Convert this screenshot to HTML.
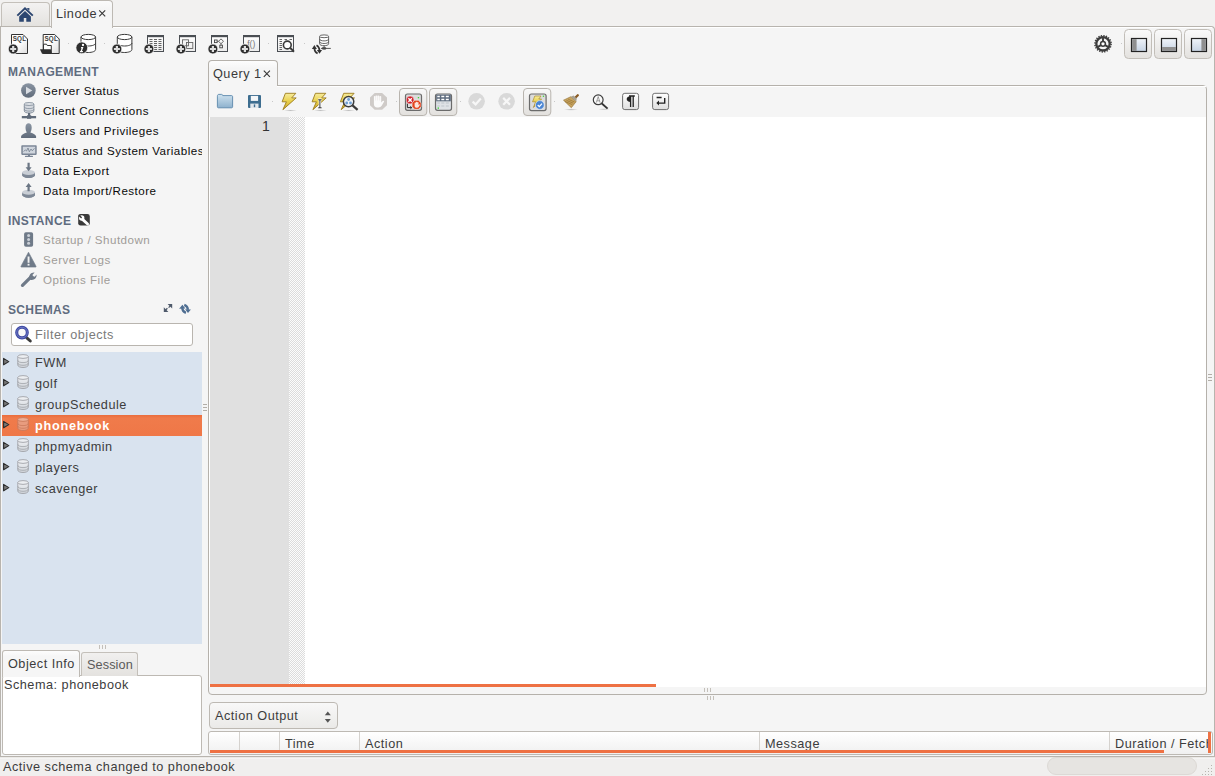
<!DOCTYPE html>
<html><head><meta charset="utf-8">
<style>
*{box-sizing:border-box;margin:0;padding:0}
html,body{width:1215px;height:776px;overflow:hidden;background:#f2f1f0;font-family:"Liberation Sans",sans-serif;color:#3c3c3c}
.a{position:absolute}
.t13{position:absolute;margin-top:1px;font-size:12.7px;line-height:13px;white-space:nowrap;letter-spacing:0.5px}
.t12{position:absolute;margin-top:-1px;font-size:11.6px;line-height:12px;white-space:nowrap;letter-spacing:0.48px}
.hdr{position:absolute;font-size:12px;line-height:12px;font-weight:bold;color:#5f6c7f;white-space:nowrap;letter-spacing:0.35px}
svg{position:absolute;overflow:visible}
</style></head><body>
<div class="a" style="left:0;top:0;width:1215px;height:30px;background:#f2f1f0"></div>
<!-- main window body -->
<div class="a" style="left:0;top:26px;width:1215px;height:740px;background:#f5f5f5;border:1px solid #b8b4ae;border-bottom:none;border-radius:0 4px 0 0"></div>
<div class="a" style="left:113px;top:27px;width:1099px;height:1px;background:#fff"></div>

<!-- top tab strip -->
<div class="a" style="left:1px;top:2px;width:49px;height:24px;border:1px solid #c4c0ba;border-bottom:none;border-radius:4px 4px 0 0;background:linear-gradient(#f3f2f1,#e4e2df)"></div>
<div class="a" style="left:51px;top:0;width:62px;height:28px;border:1px solid #bdb9b3;border-bottom:none;border-radius:4px 4px 0 0;background:linear-gradient(#fbfbfb,#f5f5f5 30%)"></div>
<div class="t13" style="left:56px;top:7px;color:#3a3a3a">Linode</div>


<!-- status bar -->
<div class="a" style="left:0;top:756px;width:1215px;height:20px;background:#f0efee;border-top:1px solid #b8b4ae"></div>
<div class="a" style="left:0;top:757px;width:1215px;height:2px;background:linear-gradient(#e6e4e1,#fafafa)"></div>
<div class="t13" style="left:3px;top:760px">Active schema changed to phonebook</div>
<div class="a" style="left:1047px;top:757px;width:150px;height:18px;border-radius:9px;background:#e6e4e1;border:1px solid #dcd9d5"></div>

<!-- sidebar -->
<div class="hdr" style="left:8px;top:66px">MANAGEMENT</div>
<div class="t12" style="left:43px;top:86px;color:#0a0a0a">Server Status</div>
<div class="t12" style="left:43px;top:106px;color:#0a0a0a">Client Connections</div>
<div class="t12" style="left:43px;top:126px;color:#0a0a0a">Users and Privileges</div>
<div class="a" style="left:43px;top:140px;width:159px;height:20px;overflow:hidden"><div class="t12" style="left:0;top:6px;color:#0a0a0a">Status and System Variables</div></div>
<div class="t12" style="left:43px;top:166px;color:#0a0a0a">Data Export</div>
<div class="t12" style="left:43px;top:186px;color:#0a0a0a">Data Import/Restore</div>

<div class="hdr" style="left:8px;top:215px">INSTANCE</div>
<div class="t12" style="left:43px;top:235px;color:#a09c98">Startup / Shutdown</div>
<div class="t12" style="left:43px;top:255px;color:#a09c98">Server Logs</div>
<div class="t12" style="left:43px;top:275px;color:#a09c98">Options File</div>

<div class="hdr" style="left:8px;top:304px">SCHEMAS</div>
<div class="a" style="left:11px;top:323px;width:182px;height:23px;background:#fff;border:1px solid #b9b5af;border-radius:3px"></div>
<div class="t13" style="left:35px;top:328px;color:#7b7b7b">Filter objects</div>

<div class="a" style="left:2px;top:352px;width:200px;height:292px;background:#d9e3ef"></div>
<div class="a" style="left:2px;top:415px;width:200px;height:21px;background:linear-gradient(#ea6d3d,#f07b4b 15%,#ef7747)"></div>
<div class="t13" style="left:35px;top:356px">FWM</div>
<div class="t13" style="left:35px;top:377px">golf</div>
<div class="t13" style="left:35px;top:398px">groupSchedule</div>
<div class="t13" style="left:35px;top:419px;color:#fff;font-weight:bold;letter-spacing:0.75px">phonebook</div>
<div class="t13" style="left:35px;top:440px">phpmyadmin</div>
<div class="t13" style="left:35px;top:461px">players</div>
<div class="t13" style="left:35px;top:482px">scavenger</div>

<!-- object info -->
<div class="a" style="left:2px;top:675px;width:200px;height:80px;background:#fff;border:1px solid #bdb9b3;border-radius:3px"></div>
<div class="a" style="left:81px;top:652px;width:57px;height:24px;border:1px solid #c4c0ba;border-bottom:none;border-radius:3px 3px 0 0;background:linear-gradient(#f1f0ef,#e4e2df)"></div>
<div class="a" style="left:2px;top:650px;width:78px;height:27px;border:1px solid #bdb9b3;border-bottom:none;border-radius:3px 3px 0 0;background:linear-gradient(#fdfdfd,#f6f6f6 20%)"></div>
<div class="t13" style="left:8px;top:657px">Object Info</div>
<div class="t13" style="left:87px;top:658px;color:#5a5a5a;letter-spacing:0.1px">Session</div>
<div class="t13" style="left:4px;top:678px">Schema: phonebook</div>

<!-- editor frame -->
<div class="a" style="left:208px;top:85px;width:999px;height:610px;border:1px solid #b5b1ab;border-radius:0 4px 4px 4px;background:#f5f5f5"></div>
<div class="a" style="left:277px;top:86px;width:929px;height:1px;background:#fff"></div>
<div class="a" style="left:208px;top:60px;width:70px;height:26px;border:1px solid #b5b1ab;border-bottom:none;border-radius:4px 4px 0 0;background:linear-gradient(#fdfdfd,#f5f5f5 30%)"></div>
<div class="t13" style="left:213px;top:67px;color:#3a3a3a">Query 1</div>

<div class="a" style="left:209px;top:117px;width:997px;height:570px;background:#fff"></div>
<div class="a" style="left:210px;top:117px;width:79px;height:567px;background:#e0e0e0"></div>
<div class="a" style="left:289px;top:117px;width:16px;height:567px;background-color:#fcfcfc;background-image:linear-gradient(45deg,#dcdcdc 25%,transparent 25%,transparent 75%,#dcdcdc 75%),linear-gradient(45deg,#dcdcdc 25%,transparent 25%,transparent 75%,#dcdcdc 75%);background-size:2px 2px;background-position:0 0,1px 1px"></div>
<div class="t13" style="left:262px;top:119px;color:#333;font-size:14px;letter-spacing:0">1</div>
<div class="a" style="left:210px;top:684px;width:446px;height:3px;background:#ee7143"></div>

<!-- right splitter handle -->
<div class="a" style="left:1208px;top:374px;width:4px;height:1px;background:#b2aea8"></div>
<div class="a" style="left:1208px;top:377px;width:4px;height:1px;background:#b2aea8"></div>
<div class="a" style="left:1208px;top:380px;width:4px;height:1px;background:#b2aea8"></div>
<!-- left splitter handle -->
<div class="a" style="left:203px;top:404px;width:4px;height:1px;background:#b2aea8"></div>
<div class="a" style="left:203px;top:407px;width:4px;height:1px;background:#b2aea8"></div>
<div class="a" style="left:203px;top:410px;width:4px;height:1px;background:#b2aea8"></div>

<!-- action output -->
<div class="a" style="left:209px;top:702px;width:129px;height:27px;border:1px solid #bdb9b3;border-radius:4px;background:linear-gradient(#f8f8f8,#ebeae8)"></div>
<div class="t13" style="left:215px;top:709px">Action Output</div>
<!-- output table -->
<div class="a" style="left:208px;top:731px;width:1005px;height:24px;border:1px solid #bdb9b3;border-radius:3px;background:linear-gradient(#ffffff,#f0f0f0)"></div>
<div class="a" style="left:239px;top:732px;width:1px;height:20px;background:#d5d2ce"></div>
<div class="a" style="left:279px;top:732px;width:1px;height:20px;background:#d5d2ce"></div>
<div class="a" style="left:359px;top:732px;width:1px;height:20px;background:#d5d2ce"></div>
<div class="a" style="left:759px;top:732px;width:1px;height:20px;background:#d5d2ce"></div>
<div class="a" style="left:1109px;top:732px;width:1px;height:20px;background:#d5d2ce"></div>
<div class="t13" style="left:285px;top:737px">Time</div>
<div class="t13" style="left:365px;top:737px">Action</div>
<div class="t13" style="left:765px;top:737px">Message</div>
<div class="a" style="left:1110px;top:732px;width:98px;height:20px;overflow:hidden"><div class="t13" style="left:5px;top:5px">Duration / Fetch</div></div>
<div class="a" style="left:210px;top:750px;width:954px;height:3px;background:#ee7143"></div>
<div class="a" style="left:1208px;top:732px;width:3px;height:21px;background:#ee7143"></div>

<svg class="a" style="left:0;top:0" width="1215" height="776" viewBox="0 0 1215 776">
<defs>
<linearGradient id="docg" x1="0" y1="0" x2="1" y2="1"><stop offset="0.45" stop-color="#ffffff"/><stop offset="1" stop-color="#dcdcdc"/></linearGradient>
<linearGradient id="wing" x1="0" y1="0" x2="0" y2="1"><stop offset="0" stop-color="#ffffff"/><stop offset="1" stop-color="#ebebeb"/></linearGradient>
<linearGradient id="boltg" x1="0" y1="0" x2="0" y2="1"><stop offset="0" stop-color="#f7ec9c"/><stop offset="0.5" stop-color="#e8cf4a"/><stop offset="1" stop-color="#caa12a"/></linearGradient>
<linearGradient id="foldg" x1="0" y1="0" x2="0" y2="1"><stop offset="0" stop-color="#cde0ee"/><stop offset="1" stop-color="#8cb0cc"/></linearGradient>
<linearGradient id="sideg" x1="0" y1="0" x2="0" y2="1"><stop offset="0" stop-color="#8b96a4"/><stop offset="1" stop-color="#5d6877"/></linearGradient>
<linearGradient id="dbg" x1="0" y1="0" x2="0" y2="1"><stop offset="0" stop-color="#eef0f3"/><stop offset="1" stop-color="#d5d8dd"/></linearGradient>
<linearGradient id="laybl" x1="0" y1="0" x2="0" y2="1"><stop offset="0" stop-color="#f0f4f9"/><stop offset="1" stop-color="#c6d3e3"/></linearGradient>
<linearGradient id="btng" x1="0" y1="0" x2="0" y2="1"><stop offset="0" stop-color="#fafafa"/><stop offset="1" stop-color="#e3e1de"/></linearGradient>
<linearGradient id="diskg" x1="0" y1="0" x2="0" y2="1"><stop offset="0" stop-color="#b9c0c9"/><stop offset="1" stop-color="#6e7886"/></linearGradient>
<radialGradient id="shad"><stop offset="0" stop-color="#000" stop-opacity="0.25"/><stop offset="1" stop-color="#000" stop-opacity="0"/></radialGradient>





</defs>

<path d="M99.2,10.4L105.2,16.4M105.2,10.4L99.2,16.4M263.8,70.7L269.9,76.8M269.9,70.7L263.8,76.8" stroke="#3a3a3a" stroke-width="1.15"/>
<!-- home icon -->
<path d="M17.3,15.6L25,8.2L32.8,15.6" fill="none" stroke="#2c4670" stroke-width="1.9"/>
<path d="M26.6,8.3L29.4,8V10.8Z" fill="#2c4670"/>
<path d="M19.2,16.5L25,11L30.9,16.5V21.8H26.3V17.9H23.8V21.8H19.2Z" fill="#2c4670"/>

<!-- toolbar 1: new sql -->
<path d="M11.5,34.5H23L27.5,39V53.5H11.5Z" fill="url(#docg)" stroke="#333" stroke-width="1"/>
<text x="12.7" y="41.4" font-family="Liberation Sans" font-weight="bold" font-size="6.3" fill="#3a3a3a" letter-spacing="0.2">SQL</text>
<g transform="translate(13.2,49)"><circle r="5" fill="#2e2e2e" stroke="#fafafa" stroke-width="0.8"/><path d="M-3,0H3M0,-3V3" stroke="#dddddd" stroke-width="2.2"/></g>
<!-- 2: open sql -->
<path d="M43.2,34.5H54.7L59.2,39V53.5H43.2Z" fill="url(#docg)" stroke="#333" stroke-width="1"/>
<text x="44.4" y="41.4" font-family="Liberation Sans" font-weight="bold" font-size="6.3" fill="#3a3a3a" letter-spacing="0.2">SQL</text>
<path d="M43.5,53.5V44.2H46.5L47.3,45.5H51.3V53.5Z" fill="#fff" stroke="#333" stroke-width="1"/>
<path d="M40,49.2H50.8L51.8,53.8H42Z" fill="#2e2e2e"/>
<!-- dots -->
<rect x="68" y="43" width="1" height="1" fill="#c8c8c8"/>
<rect x="104" y="43" width="1" height="1" fill="#c8c8c8"/>
<rect x="268" y="43" width="1" height="1" fill="#c8c8c8"/>
<rect x="304" y="43" width="1" height="1" fill="#c8c8c8"/>
<!-- 3: schema inspector DB + info -->
<path d="M81,37V49.5C81,51.3 84.4,52.5 88.3,52.5S95.6,51.3 95.6,49.5V37" fill="#fff" stroke="#3a3a3a" stroke-width="1"/>
<ellipse cx="88.3" cy="37" rx="7.3" ry="2.6" fill="#fff" stroke="#3a3a3a" stroke-width="1"/>
<path d="M81,43C81,44.8 84.4,46 88.3,46S95.6,44.8 95.6,43" fill="none" stroke="#3a3a3a" stroke-width="1"/>
<circle cx="81.8" cy="47.8" r="5.9" fill="#2e2e2e" stroke="#fafafa" stroke-width="0.7"/>
<circle cx="83" cy="45" r="1.15" fill="#fff"/><path d="M81.2,47.1H83.4L82,51.1H83.1L82.7,52.2H79.7L80.1,51.1H80.6L81.6,48.2H80.8Z" fill="#fff"/>
<!-- 4: create schema -->
<path d="M117.3,37V49.5C117.3,51.3 120.7,52.5 124.6,52.5S131.9,51.3 131.9,49.5V37" fill="#fff" stroke="#3a3a3a" stroke-width="1"/>
<ellipse cx="124.6" cy="37" rx="7.3" ry="2.6" fill="#fff" stroke="#3a3a3a" stroke-width="1"/>
<path d="M117.3,43C117.3,44.8 120.7,46 124.6,46S131.9,44.8 131.9,43" fill="none" stroke="#3a3a3a" stroke-width="1"/>
<g transform="translate(116.9,49)"><circle r="5" fill="#2e2e2e" stroke="#fafafa" stroke-width="0.8"/><path d="M-3,0H3M0,-3V3" stroke="#dddddd" stroke-width="2.2"/></g>
<!-- 5: create table -->
<g transform="translate(147,35)"><rect x="0.5" y="0.5" width="16" height="16" fill="url(#wing)" stroke="#4a4e53" stroke-width="1"/><rect x="0" y="0" width="17" height="2.2" fill="#4a4e53"/></g>
<path d="M149.5,39.5H152.5M154,39.5H157M158.5,39.5H161.5M149.5,41.5H152.5M154,41.5H157M158.5,41.5H161.5M149.5,43.5H152.5M154,43.5H157M158.5,43.5H161.5M149.5,45.5H152.5M154,45.5H157M158.5,45.5H161.5M149.5,47.5H152.5M154,47.5H157M158.5,47.5H161.5M149.5,49.5H152.5M154,49.5H157M158.5,49.5H161.5" stroke="#555" stroke-width="0.9"/>
<g transform="translate(148.9,49)"><circle r="5" fill="#2e2e2e" stroke="#fafafa" stroke-width="0.8"/><path d="M-3,0H3M0,-3V3" stroke="#dddddd" stroke-width="2.2"/></g>
<!-- 6: create view -->
<g transform="translate(179,35)"><rect x="0.5" y="0.5" width="16" height="16" fill="url(#wing)" stroke="#4a4e53" stroke-width="1"/><rect x="0" y="0" width="17" height="2.2" fill="#4a4e53"/></g>
<rect x="182.5" y="39.8" width="6" height="6" fill="none" stroke="#666" stroke-width="0.9"/>
<rect x="186.5" y="42.5" width="6.3" height="6" fill="none" stroke="#666" stroke-width="0.9"/>
<g transform="translate(180.9,49)"><circle r="5" fill="#2e2e2e" stroke="#fafafa" stroke-width="0.8"/><path d="M-3,0H3M0,-3V3" stroke="#dddddd" stroke-width="2.2"/></g>
<!-- 7: create proc -->
<g transform="translate(211,35)"><rect x="0.5" y="0.5" width="16" height="16" fill="url(#wing)" stroke="#4a4e53" stroke-width="1"/><rect x="0" y="0" width="17" height="2.2" fill="#4a4e53"/></g>
<rect x="214.5" y="40" width="2.6" height="2.6" fill="none" stroke="#444" stroke-width="0.9"/>
<path d="M221,38.9L223.5,41.3L221,43.7L218.5,41.3Z" fill="none" stroke="#444" stroke-width="0.8"/>
<path d="M217.1,41.3H218.5M221,43.7V45" stroke="#444" stroke-width="0.8"/>
<rect x="219.8" y="45.2" width="2.6" height="2.6" fill="none" stroke="#444" stroke-width="0.9"/>
<g transform="translate(212.9,49)"><circle r="5" fill="#2e2e2e" stroke="#fafafa" stroke-width="0.8"/><path d="M-3,0H3M0,-3V3" stroke="#dddddd" stroke-width="2.2"/></g>
<!-- 8: create function -->
<g transform="translate(243,35)"><rect x="0.5" y="0.5" width="16" height="16" fill="url(#wing)" stroke="#4a4e53" stroke-width="1"/><rect x="0" y="0" width="17" height="2.2" fill="#4a4e53"/></g>
<text x="247.2" y="46.5" font-family="Liberation Sans" font-size="8.5" fill="#777">f()</text>
<g transform="translate(244.9,49)"><circle r="5" fill="#2e2e2e" stroke="#fafafa" stroke-width="0.8"/><path d="M-3,0H3M0,-3V3" stroke="#dddddd" stroke-width="2.2"/></g>
<!-- 9: search table data -->
<g transform="translate(277,35)"><rect x="0.5" y="0.5" width="16" height="16" fill="url(#wing)" stroke="#4a4e53" stroke-width="1"/><rect x="0" y="0" width="17" height="2.2" fill="#4a4e53"/></g>
<path d="M279.5,39.5H282M284.5,39.5H287M289.5,39.5H292M279.5,41.5H282M279.5,43.5H282M279.5,45.5H282M279.5,47.5H282M279.5,49.5H282" stroke="#555" stroke-width="0.9"/>
<circle cx="287.3" cy="45" r="3.9" fill="#fff" stroke="#3a3a3a" stroke-width="1.6"/>
<path d="M290.2,47.9L294,51.8" stroke="#3a3a3a" stroke-width="2"/>
<!-- 10: reconnect -->
<path d="M319.6,36.3V43.8C319.6,45 321.7,45.7 324.1,45.7S328.6,45 328.6,43.8V36.3" fill="#fff" stroke="#555" stroke-width="0.9"/>
<ellipse cx="324.1" cy="36.3" rx="4.5" ry="1.4" fill="#fff" stroke="#555" stroke-width="0.9"/>
<path d="M319.6,39C319.6,40.2 321.7,40.9 324.1,40.9S328.6,40.2 328.6,39M319.6,41.6C319.6,42.8 321.7,43.5 324.1,43.5S328.6,42.8 328.6,41.6" fill="none" stroke="#555" stroke-width="0.9"/>
<path d="M324.1,45.7V47.5" stroke="#555" stroke-width="1"/>
<ellipse cx="324.1" cy="48.4" rx="2.3" ry="1.4" fill="#555"/>
<path d="M321,48.4H330.8" stroke="#444" stroke-width="0.9"/>
<path d="M311.9,48.9L314.4,45L316.9,48.9Z" fill="#333"/>
<path d="M314.4,48.5Q314.5,51.9 317.6,53.6" fill="none" stroke="#333" stroke-width="1.7"/>
<path d="M316.9,50L319.5,53.8L322.1,50Z" fill="#333"/>
<path d="M319.5,50.4Q319.4,47 316.5,45.3" fill="none" stroke="#333" stroke-width="1.7"/>

<!-- gear -->
<g transform="translate(1103,43.8)">
<circle r="8.1" fill="none" stroke="#3c3c3c" stroke-width="1.5" stroke-dasharray="1.3 1.25"/>
<circle r="6.7" fill="none" stroke="#3c3c3c" stroke-width="2.3"/>
<circle r="2.4" fill="#fff" stroke="#3c3c3c" stroke-width="1.5"/>
<path d="M0,-2.4V-5.8M-2.1,1.3L-5,3.1M2.1,1.3L5,3.1" stroke="#3c3c3c" stroke-width="1.9"/>
</g>
<rect x="1121" y="43" width="1" height="1" fill="#c8c8c8"/>
<!-- layout buttons -->
<rect x="1124.5" y="29.5" width="27" height="29" rx="4" fill="url(#btng)" stroke="#c2beb8"/>
<rect x="1154.5" y="29.5" width="27" height="29" rx="4" fill="url(#btng)" stroke="#c2beb8"/>
<rect x="1184.5" y="29.5" width="27" height="29" rx="4" fill="url(#btng)" stroke="#c2beb8"/>
<rect x="1131.5" y="38.5" width="15" height="13" fill="url(#laybl)" stroke="#222" stroke-width="1.2"/>
<rect x="1132.1" y="39.1" width="4.5" height="11.8" fill="#8f8f8f"/>
<rect x="1161.5" y="38.5" width="15" height="13" fill="url(#laybl)" stroke="#222" stroke-width="1.2"/>
<rect x="1162.1" y="47" width="13.8" height="3.9" fill="#8f8f8f"/>
<rect x="1191.5" y="38.5" width="15" height="13" fill="url(#laybl)" stroke="#222" stroke-width="1.2"/>
<rect x="1201.4" y="39.1" width="4.5" height="11.8" fill="#8f8f8f"/>
</svg>

<svg class="a" style="left:0;top:0" width="1215" height="776" viewBox="0 0 1215 776">
<defs>
<linearGradient id="sideg2" x1="0" y1="0" x2="0" y2="1"><stop offset="0" stop-color="#8a95a3"/><stop offset="1" stop-color="#5f6a79"/></linearGradient>
<linearGradient id="dbg2" x1="0" y1="0" x2="0" y2="1"><stop offset="0" stop-color="#eef0f3"/><stop offset="1" stop-color="#cfd3d9"/></linearGradient>
<linearGradient id="boltg2" x1="0" y1="0" x2="0" y2="1"><stop offset="0" stop-color="#f7ec9c"/><stop offset="0.5" stop-color="#e8cf4a"/><stop offset="1" stop-color="#caa12a"/></linearGradient>
<linearGradient id="foldg2" x1="0" y1="0" x2="0" y2="1"><stop offset="0" stop-color="#cfe2ef"/><stop offset="1" stop-color="#8db1cd"/></linearGradient>
<linearGradient id="tbtn" x1="0" y1="0" x2="0" y2="1"><stop offset="0" stop-color="#f8f8f8"/><stop offset="1" stop-color="#e2e0dd"/></linearGradient>
<linearGradient id="pbtn" x1="0" y1="0" x2="0" y2="1"><stop offset="0" stop-color="#ffffff"/><stop offset="1" stop-color="#dedede"/></linearGradient>
<radialGradient id="shad2"><stop offset="0" stop-color="#000" stop-opacity="0.22"/><stop offset="1" stop-color="#000" stop-opacity="0"/></radialGradient>



</defs>

<!-- sidebar management icons -->
<circle cx="28.4" cy="90.5" r="7.3" fill="url(#sideg2)"/>
<path d="M26,86.8L32.3,90.5L26,94.2Z" fill="#d9dde3"/>
<!-- client connections -->
<path d="M24.3,104V111C24.3,112.3 26.6,113 29.1,113S33.9,112.3 33.9,111V104" fill="#d5d9df" stroke="#808b99" stroke-width="0.9"/>
<ellipse cx="29.1" cy="104" rx="4.8" ry="1.4" fill="#e6e9ed" stroke="#808b99" stroke-width="0.9"/>
<path d="M24.3,106.7C24.3,108 26.6,108.6 29.1,108.6S33.9,108 33.9,106.7M24.3,109.2C24.3,110.5 26.6,111.1 29.1,111.1S33.9,110.5 33.9,109.2" fill="none" stroke="#808b99" stroke-width="0.8"/>
<rect x="28" y="113" width="2.2" height="3.5" fill="#5f6a79"/>
<rect x="21.8" y="116" width="14.3" height="2.3" fill="#5f6a79"/>
<rect x="27" y="115.3" width="4.2" height="3.5" fill="#5f6a79"/>
<!-- user -->
<path d="M25.5,127.6C25.5,124.6 27,123.3 28.6,123.3S31.7,124.6 31.7,127.6C31.7,130 31,131.4 30.4,132.4C33.5,133.3 35.8,134.6 36.1,136.3V138H21.1V136.3C21.4,134.6 23.7,133.3 26.8,132.4C26.2,131.4 25.5,130 25.5,127.6Z" fill="url(#sideg2)"/>
<!-- monitor -->
<rect x="21.3" y="145.3" width="15.4" height="9.6" rx="0.8" fill="#7a8595"/>
<rect x="22.8" y="146.7" width="12.4" height="6.8" fill="#cfd5dd"/>
<path d="M23.5,151.5L25.3,150L26.5,151L28,148L29.3,151.8L31,149L32.3,150.8L34.5,148.3" fill="none" stroke="#6a7585" stroke-width="0.7"/>
<rect x="28" y="155" width="2" height="1.3" fill="#7a8595"/>
<rect x="24.9" y="155.8" width="8.1" height="1.3" rx="0.6" fill="#7a8595"/>
<!-- export -->
<ellipse cx="28.6" cy="175" rx="6.4" ry="2.9" fill="#6f7a88"/>
<path d="M22.2,172.5V175C22.2,176.6 25,177.9 28.6,177.9S35,176.6 35,175V172.5" fill="#7e8896"/>
<ellipse cx="28.6" cy="172.5" rx="6.4" ry="2.5" fill="#c9ced5"/>
<path d="M27.5,162.8H29.7V167.2H31.6L28.6,171.2L25.6,167.2H27.5Z" fill="#6b7684"/>
<!-- import -->
<ellipse cx="28.6" cy="194.8" rx="6.4" ry="2.9" fill="#6f7a88"/>
<path d="M22.2,192.3V194.8C22.2,196.4 25,197.7 28.6,197.7S35,196.4 35,194.8V192.3" fill="#7e8896"/>
<ellipse cx="28.6" cy="192.3" rx="6.4" ry="2.5" fill="#c9ced5"/>
<path d="M27.5,191.2H29.7V187H31.6L28.6,183L25.6,187H27.5Z" fill="#6b7684"/>

<!-- instance header icon -->
<rect x="78.2" y="214.1" width="11.6" height="11.5" rx="2.4" fill="#3a3a3a"/>
<path d="M82.8,219.6L87.6,224" stroke="#fff" stroke-width="2.9" stroke-linecap="round"/>
<circle cx="81.7" cy="218" r="2.7" fill="#fff"/>
<path d="M79.3,215.6L81.2,217.5" stroke="#3a3a3a" stroke-width="1.5" stroke-linecap="round"/>
<!-- traffic light -->
<rect x="24.1" y="232.2" width="9" height="14.5" rx="1.8" fill="#6f7a88"/>
<circle cx="28.6" cy="235.6" r="1.5" fill="#cbd0d7"/>
<circle cx="28.6" cy="239.5" r="1.5" fill="#cbd0d7"/>
<circle cx="28.6" cy="243.3" r="1.5" fill="#cbd0d7"/>
<!-- warning -->
<path d="M28.5,252.2L36.1,266.4C36.2,266.8 36,267.1 35.6,267.1H21.4C21,267.1 20.8,266.8 20.9,266.4Z" fill="#6f7a88" stroke="#6f7a88" stroke-width="0.6" stroke-linejoin="round"/>
<rect x="27.6" y="256.5" width="1.9" height="6.3" fill="#f2f2f2"/>
<rect x="27.6" y="263.8" width="1.9" height="1.8" fill="#f2f2f2"/>
<!-- wrench -->
<path d="M22.5,285.3L30.3,277.6" stroke="#6f7a88" stroke-width="3.3" stroke-linecap="round"/>
<path d="M29.4,278.4C28.6,275.2 31.2,272.1 34.6,272.6L32.4,274.9L33.3,276.3L34.8,276.8L36.5,274.6C37,278.3 33.6,280.9 30.3,279.8Z" fill="#6f7a88"/>

<!-- schemas header icons -->
<path d="M167.6,304H172.2V308.6Z M163.8,307.3V311.9H168.4Z" fill="#4f5a6b"/>
<path d="M170.8,305.4L168.6,307.6M165.2,310.5L167.4,308.3" stroke="#4f5a6b" stroke-width="1.3"/>
<path d="M179.1,308.7L182.4,304.8L185.4,308.4Z" fill="#4f6e92"/>
<path d="M182.3,308Q182.4,311.6 185.9,312.8" fill="none" stroke="#4f6e92" stroke-width="2.3"/>
<path d="M185.1,309.3L188,313.1L190.9,309.6Z" fill="#4f6e92"/>
<path d="M187.9,309.8Q187.8,306.1 184.3,304.9" fill="none" stroke="#4f6e92" stroke-width="2.3"/>
<!-- filter magnifier -->
<path d="M26.8,337.9L30.3,341" stroke="#3a3a3a" stroke-width="3" stroke-linecap="round"/>
<circle cx="22" cy="332.6" r="5.3" fill="#f8f8f8" stroke="#3d49a3" stroke-width="3.1"/>
<circle cx="22" cy="332.6" r="5.3" fill="none" stroke="#8d95d6" stroke-width="0.6"/>

<!-- schema tree -->
<g transform="translate(0,0)"><path d="M3.6,358.4L8.8,361.6L3.6,364.8Z" fill="#777" stroke="#2a2a2a" stroke-width="1.1" stroke-linejoin="round"/></g><g transform="translate(0,0)"><path d="M17.8,356.5V365C17.8,366.6 20.3,367.5 23,367.5S28.3,366.6 28.3,365V356.5" fill="url(#dbg2)" stroke="#a0a3a8" stroke-width="0.9"/><ellipse cx="23" cy="356.5" rx="5.25" ry="1.9" fill="#eceef1" stroke="#a0a3a8" stroke-width="0.9"/><path d="M17.8,360.3C17.8,361.9 20.3,362.6 23,362.6S28.3,361.9 28.3,360.3M17.8,363C17.8,364.6 20.3,365.3 23,365.3S28.3,364.6 28.3,363" fill="none" stroke="#a0a3a8" stroke-width="0.8"/></g>
<g transform="translate(0,21)"><path d="M3.6,358.4L8.8,361.6L3.6,364.8Z" fill="#777" stroke="#2a2a2a" stroke-width="1.1" stroke-linejoin="round"/></g><g transform="translate(0,21)"><path d="M17.8,356.5V365C17.8,366.6 20.3,367.5 23,367.5S28.3,366.6 28.3,365V356.5" fill="url(#dbg2)" stroke="#a0a3a8" stroke-width="0.9"/><ellipse cx="23" cy="356.5" rx="5.25" ry="1.9" fill="#eceef1" stroke="#a0a3a8" stroke-width="0.9"/><path d="M17.8,360.3C17.8,361.9 20.3,362.6 23,362.6S28.3,361.9 28.3,360.3M17.8,363C17.8,364.6 20.3,365.3 23,365.3S28.3,364.6 28.3,363" fill="none" stroke="#a0a3a8" stroke-width="0.8"/></g>
<g transform="translate(0,42)"><path d="M3.6,358.4L8.8,361.6L3.6,364.8Z" fill="#777" stroke="#2a2a2a" stroke-width="1.1" stroke-linejoin="round"/></g><g transform="translate(0,42)"><path d="M17.8,356.5V365C17.8,366.6 20.3,367.5 23,367.5S28.3,366.6 28.3,365V356.5" fill="url(#dbg2)" stroke="#a0a3a8" stroke-width="0.9"/><ellipse cx="23" cy="356.5" rx="5.25" ry="1.9" fill="#eceef1" stroke="#a0a3a8" stroke-width="0.9"/><path d="M17.8,360.3C17.8,361.9 20.3,362.6 23,362.6S28.3,361.9 28.3,360.3M17.8,363C17.8,364.6 20.3,365.3 23,365.3S28.3,364.6 28.3,363" fill="none" stroke="#a0a3a8" stroke-width="0.8"/></g>
<g transform="translate(0,63)"><path d="M3.6,358.4L8.8,361.6L3.6,364.8Z" fill="#777" stroke="#2a2a2a" stroke-width="1.1" stroke-linejoin="round"/></g>
<g opacity="0.9"><path d="M17.8,419.5V428C17.8,429.6 20.3,430.5 23,430.5S28.3,429.6 28.3,428V419.5" fill="#e8a085" stroke="#c77a5e" stroke-width="0.9"/><ellipse cx="23" cy="419.5" rx="5.25" ry="1.9" fill="#eeb49e" stroke="#c77a5e" stroke-width="0.9"/><path d="M17.8,423.3C17.8,424.9 20.3,425.6 23,425.6S28.3,424.9 28.3,423.3M17.8,426C17.8,427.6 20.3,428.3 23,428.3S28.3,427.6 28.3,426" fill="none" stroke="#c77a5e" stroke-width="0.8"/></g>
<g transform="translate(0,84)"><path d="M3.6,358.4L8.8,361.6L3.6,364.8Z" fill="#777" stroke="#2a2a2a" stroke-width="1.1" stroke-linejoin="round"/></g><g transform="translate(0,84)"><path d="M17.8,356.5V365C17.8,366.6 20.3,367.5 23,367.5S28.3,366.6 28.3,365V356.5" fill="url(#dbg2)" stroke="#a0a3a8" stroke-width="0.9"/><ellipse cx="23" cy="356.5" rx="5.25" ry="1.9" fill="#eceef1" stroke="#a0a3a8" stroke-width="0.9"/><path d="M17.8,360.3C17.8,361.9 20.3,362.6 23,362.6S28.3,361.9 28.3,360.3M17.8,363C17.8,364.6 20.3,365.3 23,365.3S28.3,364.6 28.3,363" fill="none" stroke="#a0a3a8" stroke-width="0.8"/></g>
<g transform="translate(0,105)"><path d="M3.6,358.4L8.8,361.6L3.6,364.8Z" fill="#777" stroke="#2a2a2a" stroke-width="1.1" stroke-linejoin="round"/></g><g transform="translate(0,105)"><path d="M17.8,356.5V365C17.8,366.6 20.3,367.5 23,367.5S28.3,366.6 28.3,365V356.5" fill="url(#dbg2)" stroke="#a0a3a8" stroke-width="0.9"/><ellipse cx="23" cy="356.5" rx="5.25" ry="1.9" fill="#eceef1" stroke="#a0a3a8" stroke-width="0.9"/><path d="M17.8,360.3C17.8,361.9 20.3,362.6 23,362.6S28.3,361.9 28.3,360.3M17.8,363C17.8,364.6 20.3,365.3 23,365.3S28.3,364.6 28.3,363" fill="none" stroke="#a0a3a8" stroke-width="0.8"/></g>
<g transform="translate(0,126)"><path d="M3.6,358.4L8.8,361.6L3.6,364.8Z" fill="#777" stroke="#2a2a2a" stroke-width="1.1" stroke-linejoin="round"/></g><g transform="translate(0,126)"><path d="M17.8,356.5V365C17.8,366.6 20.3,367.5 23,367.5S28.3,366.6 28.3,365V356.5" fill="url(#dbg2)" stroke="#a0a3a8" stroke-width="0.9"/><ellipse cx="23" cy="356.5" rx="5.25" ry="1.9" fill="#eceef1" stroke="#a0a3a8" stroke-width="0.9"/><path d="M17.8,360.3C17.8,361.9 20.3,362.6 23,362.6S28.3,361.9 28.3,360.3M17.8,363C17.8,364.6 20.3,365.3 23,365.3S28.3,364.6 28.3,363" fill="none" stroke="#a0a3a8" stroke-width="0.8"/></g>

<!-- query toolbar -->
<path d="M217.4,96.2C217.4,95.2 217.8,94.4 218.6,94.4H221.6C222.4,94.4 222.6,95 222.8,95.6H231.6C232.2,95.6 232.6,96 232.6,96.6V106.8C232.6,107.4 232.2,107.8 231.6,107.8H218.4C217.8,107.8 217.4,107.4 217.4,106.8Z" fill="url(#foldg2)" stroke="#5b88ab" stroke-width="0.9"/>
<rect x="248" y="95" width="13" height="13" rx="1" fill="#3d6d8f"/>
<rect x="250.8" y="95.9" width="7.3" height="5" fill="#f4f6f8"/>
<rect x="250.3" y="103.6" width="8.2" height="4.4" fill="#e2e7ec"/>
<rect x="253.8" y="104.4" width="1.4" height="2.8" fill="#3d6d8f"/>
<rect x="272" y="101" width="1" height="1" fill="#c8c8c8"/>
<rect x="396" y="101" width="1" height="1" fill="#c8c8c8"/>
<rect x="460" y="101" width="1" height="1" fill="#c8c8c8"/>
<rect x="554" y="101" width="1" height="1" fill="#c8c8c8"/>
<g transform="translate(281.9,92.9)"><path d="M3.5,0.4H13.9L9.8,5H14.3L1,16.8L4.5,8.9H0.2Z" fill="url(#boltg2)" stroke="#9c7d1e" stroke-width="0.9" stroke-linejoin="round"/><ellipse cx="8.5" cy="17.6" rx="6.5" ry="1.1" fill="url(#shad2)"/></g>
<g transform="translate(311.9,92.9)"><path d="M3.5,0.4H13.9L9.8,5H14.3L1,16.8L4.5,8.9H0.2Z" fill="url(#boltg2)" stroke="#9c7d1e" stroke-width="0.9" stroke-linejoin="round"/><ellipse cx="8.5" cy="17.6" rx="6.5" ry="1.1" fill="url(#shad2)"/></g>
<path d="M318.2,99.8H321.6M319.9,99.8V107.8M318.2,107.8H321.6" stroke="#fff" stroke-width="2.4"/>
<path d="M318.2,99.8H321.6M319.9,99.8V107.8M318.2,107.8H321.6" stroke="#222" stroke-width="0.9"/>
<g transform="translate(340.2,92.9)"><path d="M3.5,0.4H13.9L9.8,5H14.3L1,16.8L4.5,8.9H0.2Z" fill="url(#boltg2)" stroke="#9c7d1e" stroke-width="0.9" stroke-linejoin="round"/><ellipse cx="8.5" cy="17.6" rx="6.5" ry="1.1" fill="url(#shad2)"/></g>
<circle cx="348.6" cy="101.6" r="5.2" fill="#eef3f8" stroke="#3d3d3d" stroke-width="1.5"/>
<circle cx="348.6" cy="99.5" r="1.4" fill="#6d9fd4"/>
<circle cx="346.7" cy="103" r="1.4" fill="#6d9fd4"/>
<circle cx="350.5" cy="103" r="1.4" fill="#6d9fd4"/>
<path d="M352.5,105.4L357.6,109.8" stroke="#3a3a3a" stroke-width="2.2"/>
<!-- stop hand -->
<path d="M374.7,92.9H382.1L387,97.6V105.2L382.1,109.8H374.7L370,105.2V97.6Z" fill="#cfcbc8"/>
<path d="M373.9,96.6Q373.9,95.9 374.6,95.9Q375.3,95.9 375.3,96.6V96.3Q375.3,95.6 376.6,95.6Q377.4,95.6 377.4,96.3V96Q377.4,95.5 378.6,95.5Q379.3,95.5 379.3,96V96.6Q379.3,96 380.5,96Q381.2,96 381.2,96.6V102.6L382.6,101Q383.3,100.4 384,100.9Q384.3,101.3 384,101.8L381.7,105.8Q380.7,107.4 378.4,107.4H377.3Q373.9,107.4 373.9,104Z" fill="#fbfbfb"/>
<path d="M375.6,96V100.4M377.6,95.8V100.4M379.6,96V100.4" stroke="#e2dfdc" stroke-width="0.5"/>
<!-- toggle buttons -->
<rect x="399.5" y="88.5" width="27.3" height="27" rx="3.5" fill="url(#tbtn)" stroke="#b8b4ae"/>
<rect x="429.5" y="88.5" width="27.3" height="27" rx="3.5" fill="url(#tbtn)" stroke="#b8b4ae"/>
<rect x="523.5" y="88.5" width="27.3" height="27" rx="3.5" fill="url(#tbtn)" stroke="#b8b4ae"/>
<rect x="405.5" y="94" width="16" height="16.3" rx="2" fill="#dcdcdc" stroke="#6b6b6b" stroke-width="1.2"/>
<path d="M407.4,103.6V107.6H411.6M410.4,106.4L411.8,107.6L410.4,108.8" fill="none" stroke="#2a2a2a" stroke-width="1"/>
<circle cx="410.1" cy="100" r="3.9" fill="#d0202a" stroke="#f4f4f4" stroke-width="0.5"/>
<path d="M408.4,98.3L411.8,101.7M411.8,98.3L408.4,101.7" stroke="#fff" stroke-width="1.4"/>
<path d="M414.7,100.3H418.5L421.1,102.9V106.7L418.5,109.3H414.7L412.1,106.7V102.9Z" fill="#e5431c" stroke="#f4f4f4" stroke-width="0.5"/>
<path d="M414.6,103.2Q414.6,102.5 415.2,102.5Q415.8,102.5 415.8,103.2V102.4Q415.8,101.8 416.5,101.8Q417.2,101.8 417.2,102.4V102.6Q417.2,102 417.9,102Q418.5,102 418.5,102.6V105L419.2,104.4Q419.8,104 420.1,104.5L418.8,106.8Q418.2,107.7 417,107.7H416.3Q414.6,107.7 414.6,106Z" fill="#fbe3da"/>
<rect x="417.8" y="97" width="1.3" height="1.3" fill="#3fd43a"/>
<rect x="435.5" y="94" width="16" height="16.3" rx="2" fill="#dfe2e6" stroke="#6b6b6b" stroke-width="1.2"/>
<rect x="436.2" y="94.7" width="14.6" height="6.6" fill="#5d6b7e"/>
<path d="M437.3,96.5H439.8M441.3,96.5H444.3M445.8,96.5H448.8M437.3,99.5H439.8M441.3,99.5H444.3M445.8,99.5H448.8" stroke="#fff" stroke-width="1.5"/>
<path d="M437.3,103H439.8M441.3,103H444.3M445.8,103H448.8M437.3,106H439.8M441.3,106H444.3M445.8,106H448.8" stroke="#c9ced4" stroke-width="1.3"/>
<rect x="437.6" y="107.4" width="1.4" height="1.4" fill="#3fd43a"/>
<rect x="529.5" y="94" width="16.6" height="16.6" rx="2" fill="#dcdcdc" stroke="#6b6b6b" stroke-width="1.2"/>
<path d="M534.8,96H541L538.8,99H541.6L533.4,107.5L535.6,101.8H532.5Z" fill="url(#boltg2)" stroke="#a0801e" stroke-width="0.6"/>
<circle cx="539.8" cy="105" r="4.4" fill="#4b86d4" stroke="#e8f0fa" stroke-width="0.6"/>
<path d="M537.7,105L539.3,106.6L542,103.7" fill="none" stroke="#fff" stroke-width="1.2"/>
<rect x="542.8" y="95.6" width="1.3" height="1.3" fill="#3fd43a"/>
<!-- check / x circles -->
<circle cx="476.6" cy="101.3" r="8.3" fill="#d9d9d9"/>
<path d="M472.6,101.6L475.6,104.4L480.8,98.6" fill="none" stroke="#f7f7f7" stroke-width="2.2"/>
<circle cx="506.6" cy="101.3" r="8.3" fill="#d9d9d9"/>
<path d="M503.2,97.9L510,104.7M510,97.9L503.2,104.7" stroke="#f7f7f7" stroke-width="2.2"/>
<!-- broom -->
<ellipse cx="571" cy="109.6" rx="7" ry="1.1" fill="url(#shad2)"/>
<path d="M575.5,97.5L577.8,95.2" stroke="#8a5a22" stroke-width="2.3" stroke-linecap="round"/>
<path d="M563.5,100.2L570.8,96.7L576.2,101.6L571.3,107.7Z" fill="#c9a560" stroke="#8c6a2c" stroke-width="0.6"/>
<path d="M565,101.5L572.3,104.6M566.5,100.4L573.3,103.2M568.2,99.2L574.5,102" stroke="#8c6a2c" stroke-width="0.6"/>
<path d="M570.8,96.7L573.5,95.5L576.8,98.5L576.2,101.6Z" fill="#a8a08f"/>
<!-- find -->
<ellipse cx="604" cy="109.2" rx="6" ry="1" fill="url(#shad2)"/>
<circle cx="598.2" cy="99.8" r="4.9" fill="#fafafa" stroke="#3d3d3d" stroke-width="1.2"/>
<path d="M596.3,102.6L598.2,96.6L600.1,102.6M596.9,100.8H599.5" fill="none" stroke="#666" stroke-width="0.6"/>
<path d="M601.8,103.5L607.6,108.6" stroke="#333" stroke-width="1.9"/>
<!-- pilcrow / wrap buttons -->
<rect x="622.6" y="93.3" width="16" height="16.3" rx="2.2" fill="url(#pbtn)" stroke="#6e6e6e" stroke-width="1"/>
<path d="M629,96H634.8M630.6,96V107M633.2,96V107" fill="none" stroke="#222" stroke-width="1.3"/>
<path d="M630.6,96.2C628,96.2 626.7,97.5 626.7,99.1S628,102 630.6,102Z" fill="#222"/>
<rect x="652.6" y="93.3" width="16" height="16.3" rx="2.2" fill="url(#pbtn)" stroke="#6e6e6e" stroke-width="1"/>
<path d="M656.6,97.5H661.6M664.7,98V103.1H658" fill="none" stroke="#222" stroke-width="1.4"/>
<path d="M656.3,103.1L659,100.6V105.6Z" fill="#222"/>

<!-- action output spinner -->
<path d="M324.8,715.2L327.8,711.4L330.8,715.2Z" fill="#555"/>
<path d="M324.8,719L327.8,722.8L330.8,719Z" fill="#555"/>
<!-- splitter handle below editor -->
<g fill="#c4c0ba"><rect x="704" y="688" width="1" height="4"/><rect x="707" y="688" width="1" height="4"/><rect x="710" y="688" width="1" height="4"/><rect x="707" y="696" width="1" height="4"/><rect x="710" y="696" width="1" height="4"/><rect x="713" y="696" width="1" height="4"/></g>
<!-- left lower handle -->
<g fill="#c4c0ba"><rect x="99" y="645" width="1" height="4"/><rect x="102" y="645" width="1" height="4"/><rect x="105" y="645" width="1" height="4"/></g>
<!-- grip -->
<g fill="#b8b4ae"><rect x="1211" y="765" width="1" height="1"/><rect x="1208" y="768" width="1" height="1"/><rect x="1211" y="768" width="1" height="1"/><rect x="1205" y="771" width="1" height="1"/><rect x="1208" y="771" width="1" height="1"/><rect x="1211" y="771" width="1" height="1"/><rect x="1202" y="774" width="1" height="1"/><rect x="1205" y="774" width="1" height="1"/><rect x="1208" y="774" width="1" height="1"/><rect x="1211" y="774" width="1" height="1"/></g>
</svg>

</body></html>
